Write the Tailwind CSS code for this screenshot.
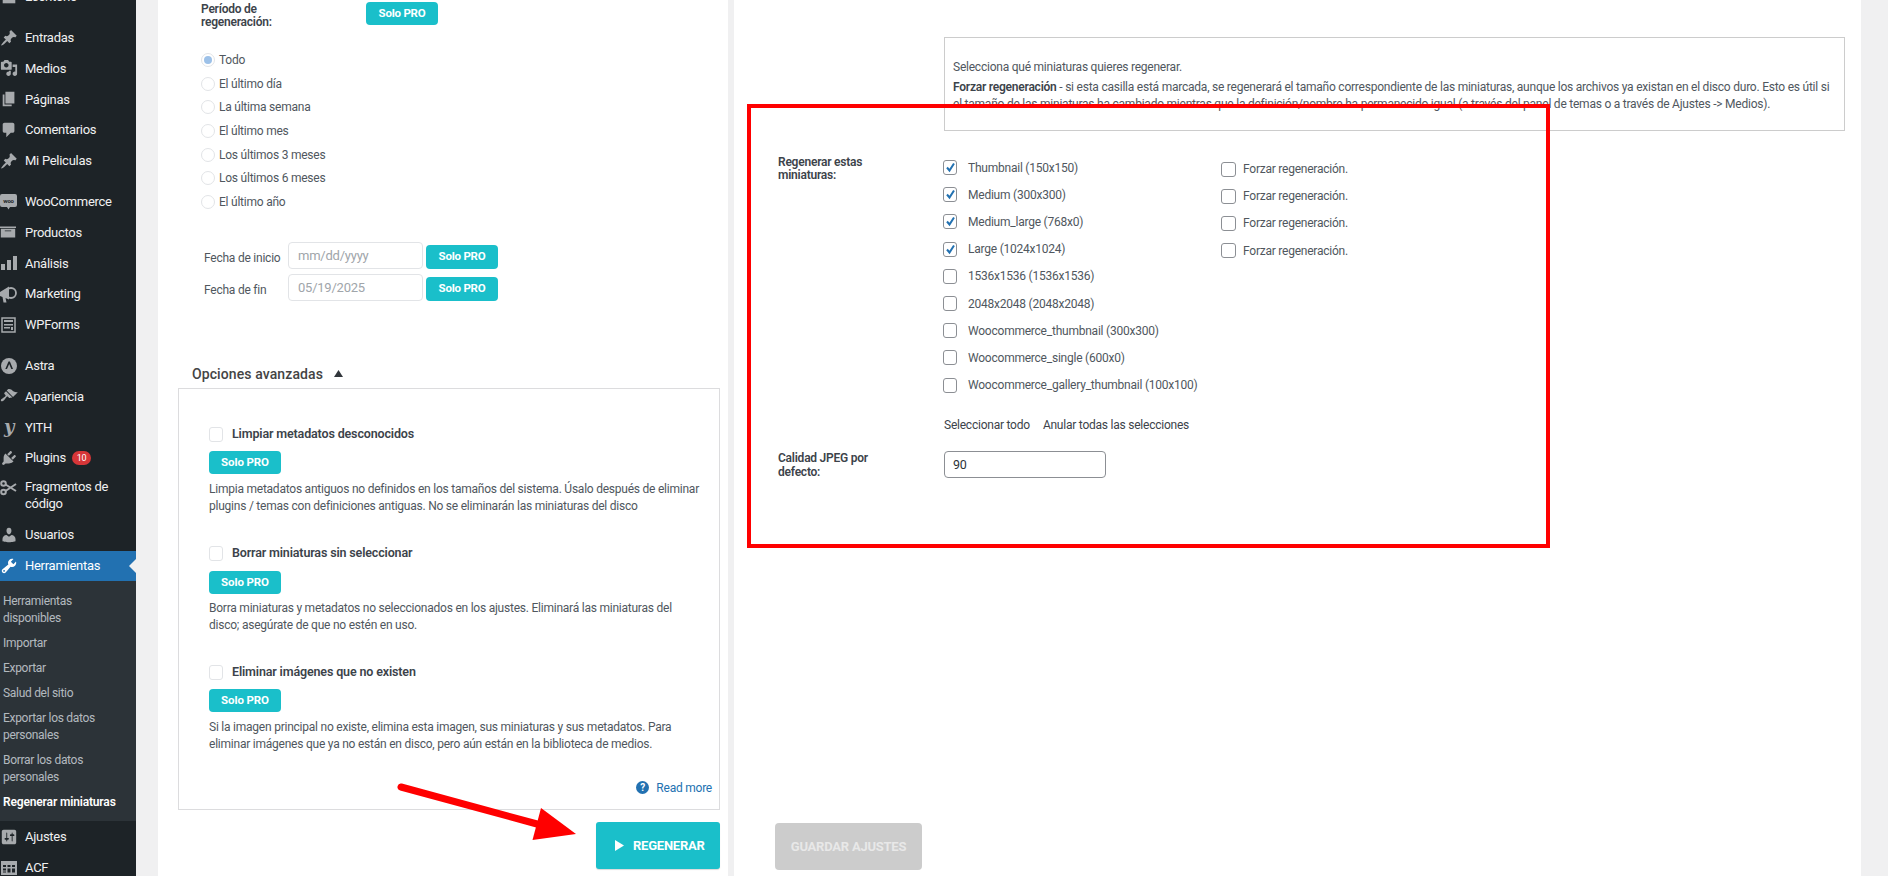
<!DOCTYPE html>
<html lang="es">
<head>
    <meta charset="UTF-8">
    <title>Regenerar miniaturas</title>
    <script src="https://cdn.jsdelivr.net/npm/@tailwindcss/browser@4"></script>
</head>
<body class="relative flex h-[876px] w-[1888px] overflow-hidden bg-[#f0f0f1] font-['Roboto',sans-serif] text-[12px] tracking-[-0.23px] text-[#50575e]">

    <!-- Sidebar -->
    <aside class="h-[876px] w-[136px] shrink-0 overflow-hidden bg-[#1d2327] text-[13px] tracking-[-0.28px] text-[#f0f0f1]">
        <div class="-mt-[18.500px]">
            <div class="flex h-[30.8px] items-center text-[#f0f0f1]">
                <svg class="h-[18px] w-[18px] fill-[#a7aaad]" viewBox="0 0 20 20"><path d="M3 3h14v14H3z"/></svg>
                <span class="ml-[7px]">Escritorio</span>
            </div>
            <div class="h-[10px]"></div>

            <div class="flex h-[30.8px] items-center">
                <svg class="h-[18px] w-[18px] fill-[#a7aaad]" viewBox="0 0 20 20"><path d="M10.44 3.02l1.82-1.82 6.36 6.35-1.83 1.82c-1.05-.68-2.48-.57-3.41.36l-.75.75c-.92.93-1.04 2.35-.35 3.41l-1.83 1.82-2.41-2.41-2.8 2.79c-.42.42-3.38 2.71-3.8 2.29s1.86-3.39 2.28-3.81l2.79-2.79L4.1 9.36l1.83-1.82c1.05.69 2.48.57 3.4-.36l.75-.75c.93-.92 1.05-2.35.36-3.41z"/></svg>
                <span class="ml-[7px]">Entradas</span>
            </div>
            <div class="flex h-[30.8px] items-center">
                <svg class="h-[18px] w-[18px] fill-[#a7aaad]" viewBox="0 0 20 20"><path d="M13 11V4c0-.55-.45-1-1-1h-1.67L9 1H5L3.67 3H2c-.55 0-1 .45-1 1v7c0 .55.45 1 1 1h10c.55 0 1-.45 1-1zM7 4.5c1.38 0 2.5 1.12 2.5 2.5S8.38 9.5 7 9.5 4.5 8.38 4.5 7 5.62 4.5 7 4.5zM14 6h5v10.5c0 1.38-1.12 2.5-2.5 2.5S14 17.88 14 16.5s1.12-2.5 2.5-2.5c.17 0 .34.02.5.05V9h-3V6zm-4 8.05V13h2v3.5c0 1.38-1.12 2.5-2.5 2.5S7 17.88 7 16.5 8.12 14 9.5 14c.17 0 .34.02.5.05z"/></svg>
                <span class="ml-[7px]">Medios</span>
            </div>
            <div class="flex h-[30.8px] items-center">
                <svg class="h-[18px] w-[18px] fill-[#a7aaad]" viewBox="0 0 20 20"><path d="M6 15V2h10v13H6zm-1 1h8v2H3V5h2v11z"/></svg>
                <span class="ml-[7px]">Páginas</span>
            </div>
            <div class="flex h-[30.8px] items-center">
                <svg class="h-[18px] w-[18px] fill-[#a7aaad]" viewBox="0 0 20 20"><path d="M5 2h9c1.1 0 2 .9 2 2v7c0 1.1-.9 2-2 2h-2l-5 5v-5H5c-1.1 0-2-.9-2-2V4c0-1.1.9-2 2-2z"/></svg>
                <span class="ml-[7px]">Comentarios</span>
            </div>
            <div class="flex h-[30.8px] items-center">
                <svg class="h-[18px] w-[18px] fill-[#a7aaad]" viewBox="0 0 20 20"><path d="M10.44 3.02l1.82-1.82 6.36 6.35-1.83 1.82c-1.05-.68-2.48-.57-3.41.36l-.75.75c-.92.93-1.04 2.35-.35 3.41l-1.83 1.82-2.41-2.41-2.8 2.79c-.42.42-3.38 2.71-3.8 2.29s1.86-3.39 2.28-3.81l2.79-2.79L4.1 9.36l1.83-1.82c1.05.69 2.48.57 3.4-.36l.75-.75c.93-.92 1.05-2.35.36-3.41z"/></svg>
                <span class="ml-[7px]">Mi Peliculas</span>
            </div>
            <div class="h-[10px]"></div>

            <div class="flex h-[30.8px] items-center">
                <svg class="h-[18px] w-[17px]" viewBox="0 0 17 18"><path fill="#a7aaad" d="M2 1h13a2 2 0 012 2v9a2 2 0 01-2 2h-5l-1.500 2.500L7 14H2a2 2 0 01-2-2V3a2 2 0 012-2z"/><text x="8.500" y="10" font-size="6" font-weight="700" text-anchor="middle" fill="#1d2327">woo</text></svg>
                <span class="ml-2">WooCommerce</span>
            </div>
            <div class="flex h-[30.8px] items-center">
                <svg class="h-4 w-4 fill-[#a7aaad]" viewBox="0 0 20 20"><path d="M20 3v2H0V3h20zM1 6h18v11H1V6zm13 3V8H6v1h8z" fill-rule="evenodd"/></svg>
                <span class="ml-[9px]">Productos</span>
            </div>
            <div class="flex h-[30.8px] items-center">
                <svg class="ml-px h-4 w-4 fill-[#a7aaad]" viewBox="0 0 16 16"><path d="M0 9h4v6H0zM6 5h4v10H6zM12 1h4v14h-4z"/></svg>
                <span class="ml-2">Análisis</span>
            </div>
            <div class="flex h-[30.8px] items-center">
                <svg class="h-[18px] w-[17px]" viewBox="0 0 17 18"><path fill="#a7aaad" d="M0 7l9-5.500v13L5.500 13l1 4.500H3.500L2.500 12 0 11zM11 0a7 8 0 010 16 7 8 0 000-16z"/><circle cx="11" cy="8" r="5" fill="none" stroke="#a7aaad" stroke-width="1.800"/></svg>
                <span class="ml-2">Marketing</span>
            </div>
            <div class="flex h-[30.8px] items-center">
                <svg class="ml-px h-4 w-4" viewBox="0 0 16 16"><path fill="none" stroke="#a7aaad" stroke-width="1.500" d="M1 1h13v14H1z"/><path fill="#a7aaad" d="M3 3h9v2H3zM3 7h9v1.500H3zM3 10h6v1.500H3zM10 10h2v3h-2z"/></svg>
                <span class="ml-2">WPForms</span>
            </div>
            <div class="h-[10px]"></div>

            <div class="flex h-[30.8px] items-center">
                <svg class="ml-px h-4 w-4" viewBox="0 0 16 16"><circle cx="8" cy="8" r="8" fill="#a7aaad"/><path fill="#1d2327" d="M7.500 3.500h1.400L12 11h-1.700L8.200 6 6 11H4.300z"/></svg>
                <span class="ml-2">Astra</span>
            </div>
            <div class="flex h-[30.8px] items-center">
                <svg class="h-[18px] w-[18px] fill-[#a7aaad]" viewBox="0 0 20 20"><path d="M14.480 11.060L7.410 3.990l1.500-1.500c.5-.56 2.300-.47 3.510.32 1.210.8 1.430 1.280 2.910 2.100 1.180.64 2.450 1.260 4.450.85zm-.71.71L6.700 4.700 4.930 6.470c-.39.39-.39 1.020 0 1.410l1.060 1.060c.39.39.39 1.030 0 1.420-.6.6-1.430 1.110-2.210 1.690-.35.26-.7.53-1.010.84C1.430 13.230.4 14.840 1.190 15.630c.79.79 2.400-.24 3.740-1.590.31-.31.58-.66.84-1.010.58-.78 1.090-1.610 1.690-2.210.39-.39 1.030-.39 1.420 0l1.060 1.060c.39.39 1.020.39 1.410 0z"/></svg>
                <span class="ml-[7px]">Apariencia</span>
            </div>
            <div class="flex h-[30.8px] items-center">
                <span class="ml-px w-4 text-center font-['DejaVu_Serif',serif] text-[18px] font-bold italic leading-none text-[#a7aaad]">y</span>
                <span class="ml-2">YITH</span>
            </div>
            <div class="flex h-[30.8px] items-center">
                <svg class="h-[18px] w-[18px] fill-[#a7aaad]" viewBox="0 0 20 20"><path d="M13.110 4.360L9.870 7.600 8 5.730l3.240-3.240c.35-.34 1.050-.2 1.560.32.52.51.66 1.210.31 1.550zm-8 1.770l.91-1.120 9.010 9.010-1.190.84c-.71.71-2.630 1.160-3.820 1.160H6.140L4.900 17.260c-.59.59-1.540.59-2.120 0-.59-.58-.59-1.530 0-2.120l1.240-1.240v-3.880c0-1.130.4-3.190 1.090-3.890zm7.260 3.970l3.240-3.240c.34-.35 1.040-.21 1.550.31.52.51.66 1.210.31 1.550l-3.240 3.250z"/></svg>
                <span class="ml-[7px]">Plugins</span>
                <span class="ml-[6px] flex h-[14px] w-[19px] items-center justify-center rounded-full bg-[#d63638] text-[9px] leading-none text-white">10</span>
            </div>
            <div class="flex h-[46.4px] items-start pt-[6px]">
                <svg class="mt-px h-4 w-[17px]" viewBox="0 0 17 16" fill="none" stroke="#a7aaad" stroke-width="2"><circle cx="3.500" cy="3.500" r="2.300"/><circle cx="3.500" cy="12" r="2.300"/><path d="M5.500 4.500L16 11M5.500 11L16 4"/></svg>
                <span class="ml-2 leading-[16.500px]">Fragmentos de<br>código</span>
            </div>
            <div class="flex h-[30.8px] items-center">
                <svg class="h-[18px] w-[18px] fill-[#a7aaad]" viewBox="0 0 20 20"><path d="M10 9.250c-2.270 0-2.730-3.440-2.730-3.440C7 4.020 7.820 2 9.970 2c2.160 0 2.980 2.020 2.710 3.810 0 0-.41 3.440-2.680 3.440zm0 2.570L12.720 10c2.390 0 4.520 2.330 4.520 4.530v2.490s-3.650 1.130-7.240 1.130c-3.650 0-7.240-1.130-7.240-1.130v-2.490c0-2.250 1.940-4.480 4.470-4.480z"/></svg>
                <span class="ml-[7px]">Usuarios</span>
            </div>
            <div class="relative flex h-[30.8px] items-center bg-[#2271b1] text-white">
                <svg class="h-[18px] w-[18px] fill-white" viewBox="0 0 20 20"><path d="M16.680 9.770c-1.340 1.340-3.300 1.670-4.950.99l-5.410 6.520c-.99.99-2.590.99-3.580 0s-.99-2.590 0-3.570l6.520-5.420c-.68-1.650-.35-3.610.99-4.950 1.280-1.280 3.120-1.620 4.720-1.060l-2.890 2.890 2.820 2.820 2.860-2.870c.53 1.580.18 3.390-1.080 4.650zM3.810 16.210c.4.39 1.040.39 1.430 0 .4-.4.4-1.040 0-1.430-.39-.4-1.030-.4-1.430 0-.39.39-.39 1.030 0 1.430z"/></svg>
                <span class="ml-[7px]">Herramientas</span>
                <svg class="absolute right-0 top-[8px] h-[14px] w-[7px] fill-[#f0f0f1]" viewBox="0 0 7 14"><path d="M7 0v14L0 7z"/></svg>
            </div>

            <!-- Submenu -->
            <ul class="bg-[#2c3338] pb-[6px] pl-[3px] pt-[8px] text-[12px] leading-[17px] tracking-[-0.3px] text-[#f0f6fc]/70">
                <li class="py-1">Herramientas<br>disponibles</li>
                <li class="py-1">Importar</li>
                <li class="py-1">Exportar</li>
                <li class="py-1">Salud del sitio</li>
                <li class="py-1">Exportar los datos<br>personales</li>
                <li class="py-1">Borrar los datos<br>personales</li>
                <li class="py-1 font-semibold tracking-[-0.15px] text-white">Regenerar miniaturas</li>
            </ul>

            <div class="flex h-[30.8px] items-center">
                <svg class="h-[18px] w-[18px] fill-[#a7aaad]" viewBox="0 0 20 20"><path fill-rule="evenodd" d="M18 16V4c0-1.100-.9-2-2-2H4c-1.100 0-2 .9-2 2v12c0 1.100.9 2 2 2h12c1.100 0 2-.9 2-2zM8 11h1c.55 0 1 .45 1 1s-.45 1-1 1H8v1.500c0 .28-.22.5-.5.5s-.5-.22-.5-.5V13H6c-.55 0-1-.45-1-1s.45-1 1-1h1V5.500c0-.28.22-.5.5-.5s.5.22.5.5V11zm5-2h-1c-.55 0-1-.45-1-1s.45-1 1-1h1V5.500c0-.28.22-.5.5-.5s.5.22.5.5V7h1c.55 0 1 .45 1 1s-.45 1-1 1h-1v5.500c0 .28-.22.5-.5.5s-.5-.22-.5-.5V9z"/></svg>
                <span class="ml-[7px]">Ajustes</span>
            </div>
            <div class="flex h-[30.8px] items-center">
                <svg class="ml-px h-4 w-4 fill-[#a7aaad]" viewBox="0 0 16 16"><path fill-rule="evenodd" d="M0 1h16v14H0zM2 5v2h3V5zM6.500 5v2h3V5zM11 5v2h3V5zM2 8.500v2h3v-2zM6.500 8.500v4h3v-4zM11 8.500v4h3v-4zM2 11.500v1h3v-1z"/></svg>
                <span class="ml-2">ACF</span>
            </div>
        </div>
    </aside>

    <main class="ml-[22px] flex h-[876px] gap-[6px]">
        <!-- Left panel -->
        <section class="relative h-[876px] w-[570px] bg-white">
            <div class="ml-[43px] mt-[2px] flex">
                <div class="w-[165px] pt-px font-semibold leading-[13px] text-[#3c434a]">Período de<br>regeneración:</div>
                <button class="h-[23px] w-[72px] rounded-[4px] bg-[#1abfca] text-[11.500px] font-bold text-white">Solo PRO</button>
            </div>

            <div class="ml-[43px] mt-[19px]">
                <label class="flex h-[23.700px] items-center gap-1"><span class="flex h-[14px] w-[14px] items-center justify-center rounded-full border border-[#e2e4e7]"><span class="h-2 w-2 rounded-full bg-[#9dc1e8]"></span></span>Todo</label>
                <label class="flex h-[23.700px] items-center gap-1"><span class="h-[14px] w-[14px] rounded-full border border-[#e2e4e7]"></span>El último día</label>
                <label class="flex h-[23.700px] items-center gap-1"><span class="h-[14px] w-[14px] rounded-full border border-[#e2e4e7]"></span>La última semana</label>
                <label class="flex h-[23.700px] items-center gap-1"><span class="h-[14px] w-[14px] rounded-full border border-[#e2e4e7]"></span>El último mes</label>
                <label class="flex h-[23.700px] items-center gap-1"><span class="h-[14px] w-[14px] rounded-full border border-[#e2e4e7]"></span>Los últimos 3 meses</label>
                <label class="flex h-[23.700px] items-center gap-1"><span class="h-[14px] w-[14px] rounded-full border border-[#e2e4e7]"></span>Los últimos 6 meses</label>
                <label class="flex h-[23.700px] items-center gap-1"><span class="h-[14px] w-[14px] rounded-full border border-[#e2e4e7]"></span>El último año</label>
            </div>

            <div class="ml-[46px] mt-[28px] flex h-[27px] items-center">
                <span class="w-[84px] pt-[5px]">Fecha de inicio</span>
                <input class="h-[27px] w-[135px] rounded-[4px] border border-[#e2e4e7] pl-[9px] text-[13px] text-[#a0a5aa]" value="mm/dd/yyyy">
                <button class="ml-[3px] mt-[3px] h-[24px] w-[72px] rounded-[4px] bg-[#1abfca] text-[11.500px] font-bold text-white">Solo PRO</button>
            </div>
            <div class="ml-[46px] mt-[5px] flex h-[27px] items-center">
                <span class="w-[84px] pt-[5px]">Fecha de fin</span>
                <input class="h-[27px] w-[135px] rounded-[4px] border border-[#e2e4e7] pl-[9px] text-[13px] text-[#a0a5aa]" value="05/19/2025">
                <button class="ml-[3px] mt-[3px] h-[24px] w-[72px] rounded-[4px] bg-[#1abfca] text-[11.500px] font-bold text-white">Solo PRO</button>
            </div>

            <div class="ml-[34px] mt-[64px] flex h-[20px] items-center text-[14px] font-medium tracking-[0.1px] text-[#444]">
                Opciones avanzadas
                <svg class="ml-[11px] mb-[3px] h-[7px] w-[9px] fill-[#32373c]" viewBox="0 0 9 7"><path d="M4.500 0L9 7H0z"/></svg>
            </div>

            <!-- Advanced options -->
            <div class="ml-[20px] mt-[3px] h-[422px] w-[542px] border border-[#dcdcde] pl-[30px] pr-[7px] pt-[38px]">
                <div class="h-[119px]">
                    <div class="flex h-[16px] items-center gap-[9px] text-[12.500px] font-semibold tracking-[-0.15px] text-[#3c434a]"><span class="h-[15px] w-[14px] rounded-[3px] border border-[#e2e4e7]"></span>Limpiar metadatos desconocidos</div>
                    <button class="mt-[8px] h-[23px] w-[72px] rounded-[4px] bg-[#1abfca] text-[11.500px] font-bold tracking-[-0.1px] text-white">Solo PRO</button>
                    <p class="mt-[7px] whitespace-nowrap leading-[17px]">Limpia metadatos antiguos no definidos en los tamaños del sistema. Úsalo después de eliminar<br>plugins / temas con definiciones antiguas. No se eliminarán las miniaturas del disco</p>
                </div>
                <div class="h-[119px]">
                    <div class="flex h-[16px] items-center gap-[9px] text-[12.500px] font-semibold tracking-[-0.15px] text-[#3c434a]"><span class="h-[15px] w-[14px] rounded-[3px] border border-[#e2e4e7]"></span>Borrar miniaturas sin seleccionar</div>
                    <button class="mt-[9px] h-[23px] w-[72px] rounded-[4px] bg-[#1abfca] text-[11.500px] font-bold tracking-[-0.1px] text-white">Solo PRO</button>
                    <p class="mt-[6px] whitespace-nowrap leading-[17px]">Borra miniaturas y metadatos no seleccionados en los ajustes. Eliminará las miniaturas del<br>disco; asegúrate de que no estén en uso.</p>
                </div>
                <div class="h-[115px]">
                    <div class="flex h-[16px] items-center gap-[9px] text-[12.500px] font-semibold tracking-[-0.15px] text-[#3c434a]"><span class="h-[15px] w-[14px] rounded-[3px] border border-[#e2e4e7]"></span>Eliminar imágenes que no existen</div>
                    <button class="mt-[8px] h-[23px] w-[72px] rounded-[4px] bg-[#1abfca] text-[11.500px] font-bold tracking-[-0.1px] text-white">Solo PRO</button>
                    <p class="mt-[7px] whitespace-nowrap leading-[17px]">Si la imagen principal no existe, elimina esta imagen, sus miniaturas y sus metadatos. Para<br>eliminar imágenes que ya no están en disco, pero aún están en la biblioteca de medios.</p>
                </div>
                <div class="flex h-[16px] items-center justify-end gap-[7px] text-[#2271b1]">
                    <svg class="h-[13px] w-[13px]" viewBox="0 0 13 13"><circle cx="6.500" cy="6.500" r="6.500" fill="#2271b1"/><text x="6.500" y="10" font-size="10" font-weight="700" text-anchor="middle" fill="#fff">?</text></svg>
                    Read more
                </div>
            </div>

            <button class="absolute left-[438px] top-[822px] flex h-[47px] w-[124px] items-center rounded-[3px] bg-[#1abfca] pl-[19px] text-[13px] font-bold text-white shadow-[0_1px_1px_rgba(0,0,0,0.15)]">
                <svg class="mr-[9px] h-[11px] w-[9px] fill-white" viewBox="0 0 9 11"><path d="M0 0l9 5.500L0 11z"/></svg>
                REGENERAR
            </button>
        </section>

        <!-- Right panel -->
        <section class="relative h-[876px] w-[1127px] bg-white">
            <div class="ml-[210px] mt-[37px] h-[94px] w-[901px] border border-[#ccc] pl-2 pt-[21px] leading-[17px]">
                <p class="mb-[3px]">Selecciona qué miniaturas quieres regenerar.</p>
                <p class="whitespace-nowrap"><b class="font-semibold text-[#3c434a]">Forzar regeneración</b> - si esta casilla está marcada, se regenerará el tamaño correspondiente de las miniaturas, aunque los archivos ya existan en el disco duro. Esto es útil si<br>el tamaño de las miniaturas ha cambiado mientras que la definición/nombre ha permanecido igual (a través del panel de temas o a través de Ajustes -&gt; Medios).</p>
            </div>

            <div class="mt-[23px] flex">
                <div class="ml-[44px] w-[165px] pt-[2px] font-semibold leading-[13px] text-[#3c434a]">Regenerar estas<br>miniaturas:</div>
                <div class="w-[278px]">
                    <label class="flex h-[27.200px] items-center gap-[11px]"><span class="flex h-[15px] w-[14px] items-center justify-center rounded-[3px] border border-[#8c8f94]"><svg class="h-[11px] w-[11px] fill-none stroke-[#2271b1] stroke-2" viewBox="0 0 11 11"><path d="M2 5.500l2.500 3L9 1.500"/></svg></span>Thumbnail (150x150)</label>
                    <label class="flex h-[27.200px] items-center gap-[11px]"><span class="flex h-[15px] w-[14px] items-center justify-center rounded-[3px] border border-[#8c8f94]"><svg class="h-[11px] w-[11px] fill-none stroke-[#2271b1] stroke-2" viewBox="0 0 11 11"><path d="M2 5.500l2.500 3L9 1.500"/></svg></span>Medium (300x300)</label>
                    <label class="flex h-[27.200px] items-center gap-[11px]"><span class="flex h-[15px] w-[14px] items-center justify-center rounded-[3px] border border-[#8c8f94]"><svg class="h-[11px] w-[11px] fill-none stroke-[#2271b1] stroke-2" viewBox="0 0 11 11"><path d="M2 5.500l2.500 3L9 1.500"/></svg></span>Medium_large (768x0)</label>
                    <label class="flex h-[27.200px] items-center gap-[11px]"><span class="flex h-[15px] w-[14px] items-center justify-center rounded-[3px] border border-[#8c8f94]"><svg class="h-[11px] w-[11px] fill-none stroke-[#2271b1] stroke-2" viewBox="0 0 11 11"><path d="M2 5.500l2.500 3L9 1.500"/></svg></span>Large (1024x1024)</label>
                    <label class="flex h-[27.200px] items-center gap-[11px]"><span class="h-[15px] w-[14px] rounded-[3px] border border-[#8c8f94]"></span>1536x1536 (1536x1536)</label>
                    <label class="flex h-[27.200px] items-center gap-[11px]"><span class="h-[15px] w-[14px] rounded-[3px] border border-[#8c8f94]"></span>2048x2048 (2048x2048)</label>
                    <label class="flex h-[27.200px] items-center gap-[11px]"><span class="h-[15px] w-[14px] rounded-[3px] border border-[#8c8f94]"></span>Woocommerce_thumbnail (300x300)</label>
                    <label class="flex h-[27.200px] items-center gap-[11px]"><span class="h-[15px] w-[14px] rounded-[3px] border border-[#8c8f94]"></span>Woocommerce_single (600x0)</label>
                    <label class="flex h-[27.200px] items-center gap-[11px]"><span class="h-[15px] w-[14px] rounded-[3px] border border-[#8c8f94]"></span>Woocommerce_gallery_thumbnail (100x100)</label>
                </div>
                <div class="pt-[1.500px]">
                    <label class="flex h-[27.200px] items-center gap-[7px]"><span class="h-[15px] w-[15px] rounded-[3px] border border-[#8c8f94]"></span>Forzar regeneración.</label>
                    <label class="flex h-[27.200px] items-center gap-[7px]"><span class="h-[15px] w-[15px] rounded-[3px] border border-[#8c8f94]"></span>Forzar regeneración.</label>
                    <label class="flex h-[27.200px] items-center gap-[7px]"><span class="h-[15px] w-[15px] rounded-[3px] border border-[#8c8f94]"></span>Forzar regeneración.</label>
                    <label class="flex h-[27.200px] items-center gap-[7px]"><span class="h-[15px] w-[15px] rounded-[3px] border border-[#8c8f94]"></span>Forzar regeneración.</label>
                </div>
            </div>

            <div class="ml-[210px] mt-[18px] flex h-[17px] items-center gap-[13px] text-[#3c434a]">
                <span>Seleccionar todo</span>
                <span>Anular todas las selecciones</span>
            </div>

            <div class="mt-[17px] flex">
                <div class="ml-[44px] w-[166px] font-semibold leading-[14px] text-[#3c434a]">Calidad JPEG por<br>defecto:</div>
                <input class="h-[27px] w-[162px] rounded-[4px] border border-[#8c8f94] px-2 text-[12.500px] text-[#2c3338]" value="90">
            </div>

            <button class="absolute left-[41px] top-[823px] h-[47px] w-[147px] rounded-[4px] bg-[#ccc] text-[13px] font-bold text-[#e8e8e8]">GUARDAR AJUSTES</button>
        </section>
    </main>

    <!-- Red annotations drawn on top of the screenshot -->
    <div class="absolute left-[747px] top-[104px] h-[444px] w-[803px] border-4 border-[#ff0000]"></div>
    <svg class="absolute left-[395px] top-[780px] h-[65px] w-[185px]" viewBox="395 780 185 65">
        <path d="M401 787L537 824" fill="none" stroke="#ff0000" stroke-width="7" stroke-linecap="round"/>
        <path d="M541 808L576 834L532.500 840z" fill="#ff0000"/>
    </svg>
</body>
</html>
